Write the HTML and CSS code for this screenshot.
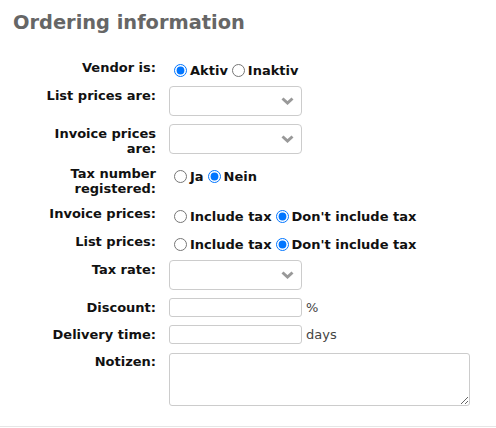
FILE: index.html
```html
<!DOCTYPE html>
<html>
<head>
<meta charset="utf-8">
<link rel="stylesheet" href="styles.css">
</head>
<body>
<div class="section">
  <h2 class="title">Ordering information</h2>
  <div class="form">
    <div class="label">Vendor is:</div>
    <div class="field radios"><label><input type="radio" name="v" checked>Aktiv</label><label><input type="radio" name="v">Inaktiv</label></div>

    <div class="label">List prices are:</div>
    <div class="field"><div class="select"><select></select><svg class="chev" width="13" height="8" viewBox="0 0 13 8"><path d="M1.5 1.5 L6.5 6 L11.5 1.5" fill="none" stroke="#999" stroke-width="3"/></svg></div></div>

    <div class="label">Invoice prices are:</div>
    <div class="field"><div class="select"><select></select><svg class="chev" width="13" height="8" viewBox="0 0 13 8"><path d="M1.5 1.5 L6.5 6 L11.5 1.5" fill="none" stroke="#999" stroke-width="3"/></svg></div></div>

    <div class="label">Tax number registered:</div>
    <div class="field radios"><label><input type="radio" name="t">Ja</label><label><input type="radio" name="t" checked>Nein</label></div>

    <div class="label">Invoice prices:</div>
    <div class="field radios"><label><input type="radio" name="ip">Include tax</label><label><input type="radio" name="ip" checked>Don't include tax</label></div>

    <div class="label">List prices:</div>
    <div class="field radios"><label><input type="radio" name="lp">Include tax</label><label><input type="radio" name="lp" checked>Don't include tax</label></div>

    <div class="label">Tax rate:</div>
    <div class="field"><div class="select"><select></select><svg class="chev" width="13" height="8" viewBox="0 0 13 8"><path d="M1.5 1.5 L6.5 6 L11.5 1.5" fill="none" stroke="#999" stroke-width="3"/></svg></div></div>

    <div class="label">Discount:</div>
    <div class="field inline"><input class="text" type="text"><span class="unit">%</span></div>

    <div class="label">Delivery time:</div>
    <div class="field inline"><input class="text" type="text"><span class="unit">days</span></div>

    <div class="label">Notizen:</div>
    <div class="field"><textarea class="notes"></textarea></div>
  </div>
</div>
</body>
</html>
```
FILE: styles.css
```css
html, body {
  margin: 0;
  padding: 0;
  background: #fff;
}
body {
  font-family: "DejaVu Sans", sans-serif;
  font-size: 13px;
  color: #111;
}
.section {
  border-bottom: 1px solid #e6e6e6;
  padding-bottom: 20px;
}
.title {
  margin: 0;
  padding: 11px 13px 0;
  font-size: 19.4px;
  line-height: 24px;
  font-weight: bold;
  color: #666;
}
.form {
  display: grid;
  grid-template-columns: 110px 1fr;
  column-gap: 13px;
  row-gap: 8px;
  padding-left: 46px;
  margin-top: 23px;
}
.label {
  font-weight: bold;
  text-align: right;
  line-height: 15px;
  padding-top: 2px;
}
.field {
  min-width: 0;
}
.radios {
  font-weight: bold;
  padding-top: 4px;
  height: 20px;
  box-sizing: border-box;
  line-height: 15px;
  white-space: nowrap;
  display: flex;
  align-items: center;
}
.radios label {
  display: inline-flex;
  align-items: center;
}
.radios input {
  margin: 1px 3px 0 5px;
  width: 13px;
  height: 13px;
}
.radios label + label input {
  margin-left: 4px;
}
.select {
  position: relative;
  width: 133px;
  height: 30px;
}
.select select {
  appearance: none;
  -webkit-appearance: none;
  width: 133px;
  height: 30px;
  border: 1px solid #ccc;
  border-radius: 4px;
  background: #fff;
  margin: 0;
}
.chev {
  position: absolute;
  right: 8px;
  top: 11px;
  pointer-events: none;
}
.inline {
  display: flex;
  align-items: center;
}
.text {
  width: 133px;
  height: 19px;
  box-sizing: border-box;
  border: 1px solid #ccc;
  border-radius: 3px;
  margin: 0;
  padding: 0 4px;
}
.unit {
  margin-left: 4px;
  color: #444;
  font-size: 13px;
}
.notes {
  display: block;
  width: 301px;
  height: 53px;
  box-sizing: border-box;
  border: 1px solid #ccc;
  border-radius: 3px;
  margin: 1px 0 0;
  resize: both;
}
```
